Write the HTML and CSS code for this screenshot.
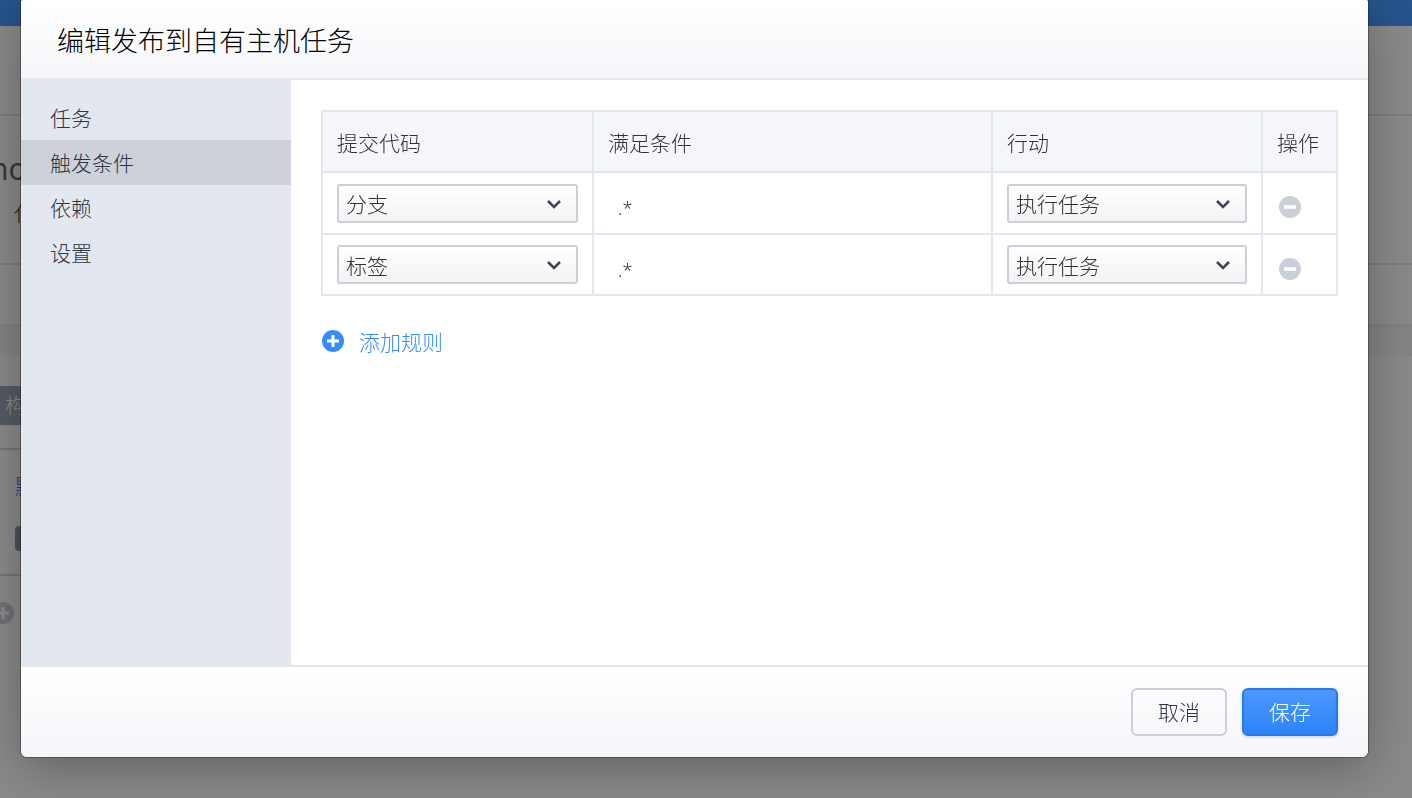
FILE: index.html
```
<!DOCTYPE html>
<html lang="zh-CN">
<head>
    <meta charset="UTF-8">
    <meta name="viewport" content="width=device-width, initial-scale=1.0">
    <title>编辑发布到自有主机任务</title>
    <link rel="stylesheet" href="styles.css">
</head>
<body>

    <div class="page">
        <div class="topbar"></div>
        <div class="page-header"></div>
        <div class="project">
            <div class="project-name">no</div>
            <div class="project-desc">代</div>
        </div>
        <div class="tabs"></div>
        <div class="band"></div>
        <div class="pipeline">
            <div class="pipeline-title">构</div>
            <div class="stage">
                <div class="stage-name">默</div>
                <div class="stage-badge"></div>
            </div>
            <svg class="stage-add" width="22" height="22" viewBox="0 0 22 22">
                <circle cx="11" cy="11" r="11" fill="currentColor"/>
                <path d="M11 5v12M5 11h12" stroke="#fff" stroke-width="3"/>
            </svg>
        </div>
    </div>

    <div class="overlay">
        <div class="modal" role="dialog" aria-labelledby="modal-title">
            <header class="modal-header">
                <h1 id="modal-title">编辑发布到自有主机任务</h1>
            </header>

            <div class="modal-body">
                <nav class="side-nav">
                    <a href="#">任务</a>
                    <a href="#" class="active">触发条件</a>
                    <a href="#">依赖</a>
                    <a href="#">设置</a>
                </nav>

                <div class="content">
                    <table class="rules">
                        <thead>
                            <tr>
                                <th class="col-type">提交代码</th>
                                <th>满足条件</th>
                                <th class="col-action">行动</th>
                                <th class="col-ops">操作</th>
                            </tr>
                        </thead>
                        <tbody>
                            <tr>
                                <td>
                                    <div class="select">
                                        <select aria-label="提交代码">
                                            <option selected>分支</option>
                                            <option>标签</option>
                                        </select>
                                        <svg width="16" height="10" viewBox="0 0 16 10"><path d="M2 2l6 6 6-6"/></svg>
                                    </div>
                                </td>
                                <td><input class="pattern" type="text" value=".*" aria-label="满足条件"></td>
                                <td>
                                    <div class="select">
                                        <select aria-label="行动">
                                            <option>执行任务</option>
                                        </select>
                                        <svg width="16" height="10" viewBox="0 0 16 10"><path d="M2 2l6 6 6-6"/></svg>
                                    </div>
                                </td>
                                <td>
                                    <button type="button" class="remove" aria-label="操作">
                                        <svg width="22" height="22" viewBox="0 0 22 22">
                                            <circle cx="11" cy="11" r="11" fill="#cbcfd9"/>
                                            <path d="M5 11h12" stroke="#fff" stroke-width="3.6"/>
                                        </svg>
                                    </button>
                                </td>
                            </tr>
                            <tr>
                                <td>
                                    <div class="select">
                                        <select aria-label="提交代码">
                                            <option>分支</option>
                                            <option selected>标签</option>
                                        </select>
                                        <svg width="16" height="10" viewBox="0 0 16 10"><path d="M2 2l6 6 6-6"/></svg>
                                    </div>
                                </td>
                                <td><input class="pattern" type="text" value=".*" aria-label="满足条件"></td>
                                <td>
                                    <div class="select">
                                        <select aria-label="行动">
                                            <option>执行任务</option>
                                        </select>
                                        <svg width="16" height="10" viewBox="0 0 16 10"><path d="M2 2l6 6 6-6"/></svg>
                                    </div>
                                </td>
                                <td>
                                    <button type="button" class="remove" aria-label="操作">
                                        <svg width="22" height="22" viewBox="0 0 22 22">
                                            <circle cx="11" cy="11" r="11" fill="#cbcfd9"/>
                                            <path d="M5 11h12" stroke="#fff" stroke-width="3.6"/>
                                        </svg>
                                    </button>
                                </td>
                            </tr>
                        </tbody>
                    </table>

                    <a href="#" class="add-rule">
                        <svg width="22" height="22" viewBox="0 0 22 22">
                            <circle cx="11" cy="11" r="11" fill="#368cff"/>
                            <path d="M11 5v12M5 11h12" stroke="#fff" stroke-width="3"/>
                        </svg>
                        <span>添加规则</span>
                    </a>
                </div>
            </div>

            <footer class="modal-footer">
                <button type="button" class="btn">取消</button>
                <button type="button" class="btn btn-primary">保存</button>
            </footer>
        </div>
    </div>

</body>
</html>
```

FILE: styles.css
```
* {
    box-sizing: border-box;
}

body {
    margin: 0;
    overflow: hidden;
    font-family: "Noto Sans CJK SC", sans-serif;
    font-size: 21px;
    font-weight: 300;
    line-height: 30px;
    color: #333;
    background-color: #fdfdff;
}

svg {
    display: block;
}

button, input, select {
    font: inherit;
    color: inherit;
}

/* page behind the dialog */
.page {
    height: 100vh;
    overflow: hidden;
}

.topbar {
    height: 26px;
    background-color: #469aff;
}

.page-header {
    height: 90px;
    border-bottom: 2px solid #e3e6ee;
}

.project {
    height: 149px;
    padding: 33px 14px 0 0;
    border-bottom: 2px solid #e3e6ee;
}

.project-name {
    margin-left: -10px;
    font-family: "Noto Sans", sans-serif;
    font-size: 30px;
    font-weight: 400;
    line-height: 40px;
    color: #666;
}

.project-desc {
    margin: 8px 0 0 14px;
}

.tabs {
    height: 59px;
}

.band {
    height: 32px;
    background: linear-gradient(#e8e9ee, #f3f3f5 6px);
}

.pipeline {
    width: 80%;
    padding-top: 30px;
}

.pipeline-title {
    height: 39px;
    padding: 3px 5px;
    color: #fff;
    background-color: #9ea6b4;
}

.stage {
    height: 128px;
    margin-top: 23px;
    padding: 20px 15px;
    border-top: 2px solid #d5d8e0;
    border-bottom: 2px solid #d5d8e0;
}

.stage-name {
    color: #2a5bf5;
}

.stage-badge {
    width: 60px;
    height: 25px;
    margin-top: 26px;
    border-radius: 4px;
    background-color: #8d96a3;
}

.stage-add {
    margin: 26px 0 0 -8px;
    color: #cbcfd9;
}

/* dialog */
.overlay {
    position: fixed;
    inset: 0;
    display: flex;
    padding: 0 44px 41px 21px;
    background-color: rgba(0, 0, 0, 0.46);
}

.modal {
    flex: 1;
    display: flex;
    flex-direction: column;
    overflow: hidden;
    border-radius: 2px 2px 6px 6px;
    background-color: #fff;
    box-shadow: 0 0 0 1px rgba(0, 0, 0, 0.3), 0 10px 50px rgba(0, 0, 0, 0.3);
}

.modal-header {
    padding: 22px 36px 20px;
    border-bottom: 2px solid #e5e6e8;
    background: linear-gradient(#fff, #f5f6fa);
}

.modal-header h1 {
    margin: 0;
    font-size: 27px;
    font-weight: 300;
    line-height: 36px;
    color: #000;
}

.modal-body {
    flex: 1;
    display: flex;
}

.side-nav {
    width: 270px;
    padding-top: 15px;
    background-color: #e3e7ef;
}

.side-nav a {
    display: block;
    padding: 7px 29px 8px;
    color: #2f3442;
    text-decoration: none;
}

.side-nav .active {
    background-color: #cdd1d9;
}

.content {
    flex: 1;
    padding: 30px;
}

.rules {
    width: 100%;
    table-layout: fixed;
    border-collapse: collapse;
}

.rules th,
.rules td {
    padding: 0 14px;
    border: 2px solid #e3e6ee;
    text-align: left;
}

.rules th {
    height: 61px;
    font-weight: 300;
    background-color: #f5f6fa;
}

.rules td {
    height: 62px;
}

.rules tr:last-child td {
    height: 61px;
}

.col-type {
    width: 271px;
}

.col-action {
    width: 270px;
}

.col-ops {
    width: 75px;
}

.select {
    position: relative;
}

.select select {
    display: block;
    width: 100%;
    height: 39px;
    padding: 0 40px 0 7px;
    appearance: none;
    border: 2px solid #cbcfd9;
    border-radius: 3px;
    background: linear-gradient(#fff, #f3f3f3);
}

.select svg {
    position: absolute;
    top: 15px;
    right: 16px;
    fill: none;
    stroke: #3e4351;
    stroke-width: 2.5;
    pointer-events: none;
}

.pattern {
    display: block;
    width: 100%;
    padding: 10px 10px 0;
    border: 0;
    background: none;
    font-family: "Noto Sans", sans-serif;
    font-size: 18px;
    outline: none;
}

.remove {
    display: block;
    margin-top: 8px;
    padding: 0 2px;
    border: 0;
    background: none;
    cursor: pointer;
}

.add-rule {
    display: inline-flex;
    align-items: center;
    gap: 15px;
    margin: 30px 1px 0;
    color: #368cff;
    text-decoration: none;
}

.modal-footer {
    display: flex;
    justify-content: flex-end;
    gap: 15px;
    padding: 21px 30px;
    border-top: 2px solid #e5e6e8;
    background: linear-gradient(#fff, #f5f6fa);
}

.btn {
    width: 96px;
    height: 48px;
    padding: 0 0 2px;
    border: 2px solid #cbcfd9;
    border-radius: 6px;
    color: #2f3442;
    background: none;
    cursor: pointer;
}

.btn-primary {
    border-color: #227cf0;
    color: #fff;
    background: linear-gradient(#4c98ff, #2d84f7);
    box-shadow: 0 1px 3px rgba(0, 0, 0, 0.2);
}
```
